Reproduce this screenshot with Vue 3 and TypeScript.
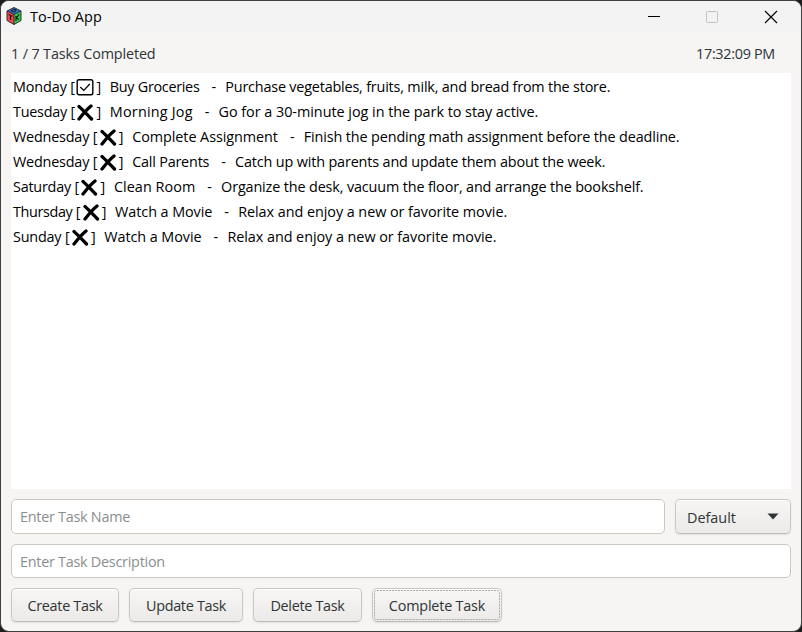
<script setup lang="ts">
import { ref } from 'vue'

interface Task {
  day: string
  name: string
  description: string
  done: boolean
  // letter spacing in px for day, name and description
  tracking: [number, number, number]
}

const tasks = ref<Task[]>([
  { day: 'Monday', name: 'Buy Groceries', description: 'Purchase vegetables, fruits, milk, and bread from the store.', done: true, tracking: [-0.12, -0.3, -0.19] },
  { day: 'Tuesday', name: 'Morning Jog', description: 'Go for a 30-minute jog in the park to stay active.', done: false, tracking: [-0.25, 0.2, -0.03] },
  { day: 'Wednesday', name: 'Complete Assignment', description: 'Finish the pending math assignment before the deadline.', done: false, tracking: [-0.2, -0.06, -0.13] },
  { day: 'Wednesday', name: 'Call Parents', description: 'Catch up with parents and update them about the week.', done: false, tracking: [-0.2, -0.2, -0.15] },
  { day: 'Saturday', name: 'Clean Room', description: 'Organize the desk, vacuum the floor, and arrange the bookshelf.', done: false, tracking: [-0.22, 0.05, -0.14] },
  { day: 'Thursday', name: 'Watch a Movie', description: 'Relax and enjoy a new or favorite movie.', done: false, tracking: [-0.36, -0.07, -0.05] },
  { day: 'Sunday', name: 'Watch a Movie', description: 'Relax and enjoy a new or favorite movie.', done: false, tracking: [-0.2, -0.07, -0.05] },
])
const taskName = ref('')
const taskDescription = ref('')

const spacing = (value: number) => ({ letterSpacing: `${value}px` })
</script>

<template>
  <div class="desktop">
    <div class="window">
      <header class="titlebar">
        <svg class="logo" width="16" height="18" viewBox="0 0 16 18">
          <path d="M8 0.5 15 4 8 7.5 1 4Z" fill="#3d70c4" />
          <path d="M1 4 8 7.5V17.5L1 13.5Z" fill="#f0484e" />
          <path d="M15 4 8 7.5V17.5L15 13.5Z" fill="#35cf50" />
          <path d="M8 0.5 15 4V13.5L8 17.5 1 13.5V4Z M1 4 8 7.5 15 4 M8 7.5V17.5" fill="none" stroke="#202020" stroke-width="0.9" />
          <path d="M10.500 3 8 2.200 5 3.800 8 5.200 10 4.200 8.500 3.600" fill="none" stroke="#101c38" stroke-width="1" />
          <path d="M2.700 7.500 6.300 9.300M4.500 8.400V13" fill="none" stroke="#200808" stroke-width="1.200" />
          <path d="M10 9V14M13.200 7.300 10.300 11.200 13.200 12.300" fill="none" stroke="#062006" stroke-width="1.200" />
        </svg>
        <span class="title">To-Do App</span>
        <div class="controls">
          <svg width="14" height="14" viewBox="0 0 14 14"><path d="M1 6.5H13" stroke="#000" /></svg>
          <svg width="14" height="14" viewBox="0 0 14 14"><rect x="1.5" y="1.5" width="11" height="11" rx="1" fill="none" stroke="#c3c3c3" /></svg>
          <svg width="14" height="14" viewBox="0 0 14 14"><path d="M1 1 13 13M13 1 1 13" stroke="#000" stroke-width="1.15" /></svg>
        </div>
      </header>
      <main class="content">
        <div class="status">
          <span class="count">1 / 7 Tasks Completed</span>
          <span class="clock">17:32:09 PM</span>
        </div>
        <ul class="list">
          <li v-for="(task, i) in tasks" :key="i" class="task">
            <span :style="spacing(task.tracking[0])">{{ task.day }} [</span>
            <svg v-if="task.done" class="mark" width="18" height="18" viewBox="0 0 18 18">
              <rect x="1.200" y="1.700" width="15.600" height="15" rx="1.800" fill="none" stroke="#000" stroke-width="1.400" />
              <path d="M4.300 9 7.800 12.400 13.800 6" fill="none" stroke="#000" stroke-width="1.300" />
            </svg>
            <svg v-else class="mark" width="18" height="18" viewBox="0 0 18 18">
              <path d="M3 3.500C7 7 11 11.500 15.500 16M15 3C10.500 6.500 7 11 3 16" fill="none" stroke="#000" stroke-width="3.300" stroke-linecap="round" />
            </svg>
            <span>]</span>
            <span class="name" :style="spacing(task.tracking[1])">{{ task.name }}</span>
            <span class="dash">-</span>
            <span :style="spacing(task.tracking[2])">{{ task.description }}</span>
          </li>
        </ul>
        <div class="row">
          <input v-model="taskName" class="entry tall" type="text" placeholder="Enter Task Name" />
          <button class="button combo" type="button">
            <span>Default</span>
            <svg width="12" height="7" viewBox="0 0 12 7"><path d="M0.5 0.5H11.5L6 6.5Z" fill="#2e3436" /></svg>
          </button>
        </div>
        <input v-model="taskDescription" class="entry" type="text" placeholder="Enter Task Description" />
        <div class="actions">
          <button class="button create" type="button">Create Task</button>
          <button class="button update" type="button">Update Task</button>
          <button class="button delete" type="button">Delete Task</button>
          <button class="button complete" type="button">
            Complete Task
            <svg class="focus" width="126" height="30" viewBox="0 0 126 30">
              <rect x="0.5" y="0.5" width="125" height="29" rx="2.5" fill="none" stroke="#a9aaaa" stroke-dasharray="2 1" />
            </svg>
          </button>
        </div>
      </main>
    </div>
  </div>
</template>

<style>
body {
  background: #232323;
}
</style>

<style scoped>
.desktop {
  width: 802px;
  height: 632px;
  background: #1d1d1d;
  font-family: "Open Sans", "Noto Sans", sans-serif;
  font-size: 14.4px;
  letter-spacing: -0.3px;
  color: #2e3436;
}
.window {
  box-sizing: border-box;
  width: 802px;
  height: 632px;
  border: 1px solid #3f3f3f;
  border-radius: 9px;
  background: #f6f5f4;
  overflow: hidden;
  display: flex;
  flex-direction: column;
}
.titlebar {
  height: 31px;
  background: #f3f3f3;
  display: flex;
  align-items: center;
  padding: 0 23px 0 5px;
  color: #000;
}
.logo {
  margin-bottom: 1px;
}
.title {
  margin-left: 8px;
  letter-spacing: 0.12px;
}
.controls {
  margin-left: auto;
  display: flex;
  gap: 45px;
}
.controls svg:first-child {
  margin-right: -1px;
}
.content {
  flex: 1;
  display: flex;
  flex-direction: column;
  padding: 0 10px 9px;
}
.status {
  height: 41px;
  box-sizing: border-box;
  padding: 2px 16px 0 0;
  display: flex;
  align-items: center;
  justify-content: space-between;
}
.count {
  letter-spacing: -0.14px;
}
.list {
  margin: 0 0 10px;
  padding: 1px 2px 0;
  list-style: none;
  flex: 1;
  background: #fff;
  color: #000;
}
.task {
  height: 25px;
  display: flex;
  align-items: center;
  white-space: pre;
}
.mark {
  flex: none;
  margin: 0 2px 0 1.5px;
}
.name {
  margin-left: 9px;
}
.dash {
  margin: 0 9.5px 0 12px;
}
.row {
  display: flex;
  gap: 10px;
  margin-bottom: 10px;
}
.entry {
  box-sizing: border-box;
  height: 34px;
  width: 100%;
  padding: 0 8px;
  border: 1px solid #cdc7c2;
  border-radius: 5px;
  background: #fff;
  font: inherit;
  letter-spacing: -0.26px;
  outline: none;
}
.entry::placeholder {
  color: #8b8e8f;
  opacity: 1;
}
.tall {
  height: 35px;
  flex: 1;
  min-width: 0;
}
.actions {
  display: flex;
  gap: 10px;
  margin-top: 10px;
}
.button {
  box-sizing: border-box;
  height: 34px;
  padding: 1px 0 0;
  border: 1px solid #cdc7c2;
  border-bottom-color: #bfb8b1;
  border-radius: 5px;
  background: linear-gradient(to bottom, #f6f5f4 10%, #edebe9 90%);
  box-shadow: inset 0 1px #fff, 0 1px 2px rgba(0, 0, 0, 0.08);
  color: #2e3436;
  font: inherit;
  letter-spacing: inherit;
}
.combo {
  width: 116px;
  height: 35px;
  padding: 2px 11px 0;
  display: flex;
  align-items: center;
  justify-content: space-between;
  letter-spacing: 0;
}
.combo svg {
  margin-bottom: 3px;
}
.create { width: 108px; }
.update { width: 114px; }
.delete { width: 109px; }
.complete {
  position: relative;
  width: 130px;
  letter-spacing: -0.2px;
}
.focus {
  position: absolute;
  top: 1px;
  left: 1px;
}
</style>
